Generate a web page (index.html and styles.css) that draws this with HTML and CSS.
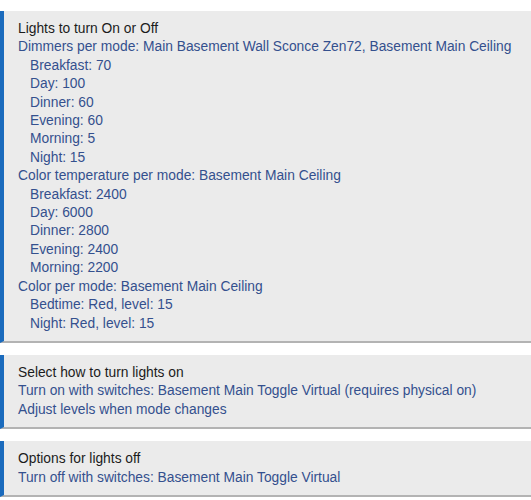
FILE: index.html
```html
<!DOCTYPE html>
<html>
<head>
<meta charset="utf-8">
<link rel="stylesheet" href="styles.css">
</head>
<body>
<div class="list">
  <div class="card">
    <div class="title">Lights to turn On or Off</div>
    <div class="link">Dimmers per mode: Main Basement Wall Sconce Zen72, Basement Main Ceiling</div>
    <div class="link sub">Breakfast: 70</div>
    <div class="link sub">Day: 100</div>
    <div class="link sub">Dinner: 60</div>
    <div class="link sub">Evening: 60</div>
    <div class="link sub">Morning: 5</div>
    <div class="link sub">Night: 15</div>
    <div class="link">Color temperature per mode: Basement Main Ceiling</div>
    <div class="link sub">Breakfast: 2400</div>
    <div class="link sub">Day: 6000</div>
    <div class="link sub">Dinner: 2800</div>
    <div class="link sub">Evening: 2400</div>
    <div class="link sub">Morning: 2200</div>
    <div class="link">Color per mode: Basement Main Ceiling</div>
    <div class="link sub">Bedtime: Red, level: 15</div>
    <div class="link sub">Night: Red, level: 15</div>
  </div>
  <div class="card">
    <div class="title">Select how to turn lights on</div>
    <div class="link">Turn on with switches: Basement Main Toggle Virtual (requires physical on)</div>
    <div class="link">Adjust levels when mode changes</div>
  </div>
  <div class="card">
    <div class="title">Options for lights off</div>
    <div class="link">Turn off with switches: Basement Main Toggle Virtual</div>
  </div>
</div>
</body>
</html>
```
FILE: styles.css
```css
html, body {
  margin: 0;
  padding: 0;
  background: #ffffff;
}
body {
  font-family: "Liberation Sans", Arial, sans-serif;
  font-size: 13.8px;
  line-height: 18.4px;
}
.list {
  display: flex;
  flex-direction: column;
  gap: 12px;
  padding-top: 11px;
}
.card {
  background: #ebebeb;
  border-left: 4px solid #1b6bbd;
  border-bottom: 2px solid #b3b3b3;
  padding: 9px 8px 8px 14px;
}
.title {
  color: #1c1c1c;
}
.link {
  color: #34508e;
}
.sub {
  padding-left: 12px;
}
```
